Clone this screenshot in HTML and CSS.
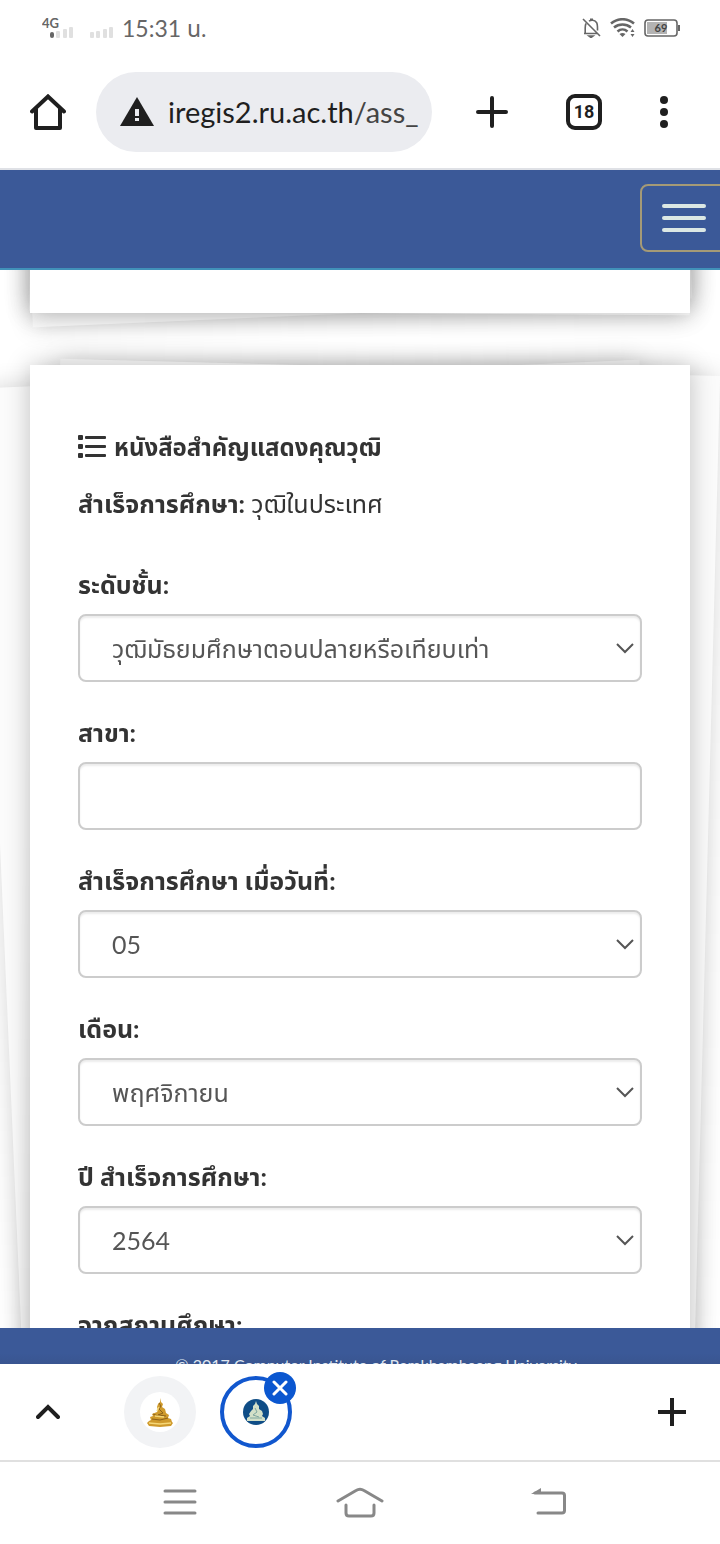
FILE: index.html
```html
<!DOCTYPE html>
<html lang="th">

<head>
    <meta charset="UTF-8">
    <meta name="viewport" content="width=device-width, initial-scale=1">
    <title>iregis2.ru.ac.th</title>
    <link rel="stylesheet" href="styles.css">
</head>

<body>

    <div class="status-bar">
        <div class="status-left">
            <svg width="74" height="24" viewBox="0 0 74 24">
                <text class="net-type" x="0" y="12">4G</text>
                <rect x="8" y="16" width="4" height="6" rx="2" fill="#666" />
                <g fill="#e0e0e0">
                    <rect x="14" y="15" width="4" height="7" rx="1" />
                    <rect x="21" y="13" width="4" height="9" rx="1" />
                    <rect x="27" y="11" width="4" height="11" rx="1" />
                    <rect x="48" y="16" width="4" height="6" rx="1" />
                    <rect x="54" y="15" width="4" height="7" rx="1" />
                    <rect x="61" y="13" width="4" height="9" rx="1" />
                    <rect x="67" y="11" width="4" height="11" rx="1" />
                </g>
            </svg>
            <span class="clock">15:31 น.</span>
        </div>
        <div class="status-right">
            <svg width="20" height="20" viewBox="0 0 20 20" fill="none" stroke="#666" stroke-width="1.6">
                <path d="M4 5.5C3.2 7 3.2 8 3.2 10v5.2M2 15.500h13M1 1l17 17M7 3.200C9 1.800 12.500 1.700 14.500 4.500c1.200 1.700 1 4 1 8" />
                <path d="M7 18h4l-2 1.500zM8 1.200h3" />
            </svg>
            <svg width="26" height="20" viewBox="0 0 26 20" fill="none" stroke="#666" stroke-width="2.6">
                <path d="M1 5.500C8-.2 17-.2 24 5.500M4 9.500c5-4 12-4 17 0M7.500 13.400c3-2.600 7-2.600 10 0" />
                <path d="M9.500 16q3-2 6 0l-3 3z" fill="#666" stroke="none" />
                <path d="M20.500 14l2-3 2 3zM20.500 16l2 3 2-3z" fill="#666" stroke="none" />
            </svg>
            <svg width="36" height="18" viewBox="0 0 36 18">
                <rect x="1" y="1" width="32" height="16" rx="3" fill="#fff" stroke="#666" stroke-width="1.6" />
                <rect x="3" y="3" width="20" height="12" fill="#b3b3b3" />
                <rect x="34" y="6" width="2" height="6" fill="#666" />
                <text class="battery" x="17" y="13" text-anchor="middle">69</text>
            </svg>
        </div>
    </div>

    <div class="toolbar">
        <button class="icon-btn" aria-label="Home">
            <svg width="36" height="36" viewBox="0 0 36 36" fill="none" stroke="#1f1f1f" stroke-width="4" stroke-linejoin="round" stroke-linecap="round">
                <path d="M2 17.500L18 2.500l16 15" stroke-linejoin="miter" />
                <path d="M6 15v19h24V15" />
            </svg>
        </button>
        <a class="address" href="#">
            <svg width="34" height="30" viewBox="0 0 34 30">
                <path d="M17 0l17 29H0z" fill="#1f1f1f" />
                <path d="M15 12h4v7h-4zM15 21h4v3h-4z" fill="#ebecf0" />
            </svg>
            <span class="url">iregis2.ru.ac.th<span class="path">/ass_</span></span>
        </a>
        <button class="icon-btn new-tab" aria-label="New tab">
            <svg width="32" height="32" viewBox="0 0 32 32" stroke="#1f1f1f" stroke-width="4" stroke-linecap="round">
                <path d="M16 2v28M2 16h28" />
            </svg>
        </button>
        <button class="tab-count">18</button>
        <button class="icon-btn" aria-label="Menu">
            <svg width="10" height="32" viewBox="0 0 10 32" fill="#1f1f1f">
                <circle cx="5" cy="4" r="4" />
                <circle cx="5" cy="16" r="4" />
                <circle cx="5" cy="28" r="4" />
            </svg>
        </button>
    </div>

    <main class="page">
        <nav class="navbar">
            <button class="navbar-toggle" aria-label="Toggle navigation">
                <span class="icon-bar"></span>
                <span class="icon-bar"></span>
                <span class="icon-bar"></span>
            </button>
        </nav>

        <div class="content">
            <section class="paper paper-previous"></section>

            <section class="paper paper-form">
                <form>
                    <h4>
                        <svg width="28" height="24" viewBox="0 0 28 24" fill="#333">
                            <rect x="0" y="0" width="5" height="5" rx="1" />
                            <rect x="0" y="9" width="5" height="5" rx="1" />
                            <rect x="0" y="18" width="5" height="5" rx="1" />
                            <rect x="7" y="1" width="21" height="3" rx="1" />
                            <rect x="7" y="10" width="21" height="3" rx="1" />
                            <rect x="7" y="19" width="21" height="3" rx="1" />
                        </svg>
                        หนังสือสำคัญแสดงคุณวุฒิ
                    </h4>
                    <p class="summary"><strong>สำเร็จการศึกษา:</strong> วุฒิในประเทศ</p>

                    <div class="form-group">
                        <label for="level">ระดับชั้น:</label>
                        <div class="select-wrap">
                            <select class="form-control" id="level">
                                <option>วุฒิมัธยมศึกษาตอนปลายหรือเทียบเท่า</option>
                            </select>
                            <svg class="chevron" width="18" height="12" viewBox="0 0 18 12"><path d="M1 2l8 8 8-8" /></svg>
                        </div>
                    </div>
                    <div class="form-group">
                        <label for="major">สาขา:</label>
                        <input class="form-control" type="text" id="major">
                    </div>
                    <div class="form-group">
                        <label for="day">สำเร็จการศึกษา เมื่อวันที่:</label>
                        <div class="select-wrap">
                            <select class="form-control" id="day">
                                <option>05</option>
                            </select>
                            <svg class="chevron" width="18" height="12" viewBox="0 0 18 12"><path d="M1 2l8 8 8-8" /></svg>
                        </div>
                    </div>
                    <div class="form-group">
                        <label for="month">เดือน:</label>
                        <div class="select-wrap">
                            <select class="form-control" id="month">
                                <option>พฤศจิกายน</option>
                            </select>
                            <svg class="chevron" width="18" height="12" viewBox="0 0 18 12"><path d="M1 2l8 8 8-8" /></svg>
                        </div>
                    </div>
                    <div class="form-group">
                        <label for="year">ปี สำเร็จการศึกษา:</label>
                        <div class="select-wrap">
                            <select class="form-control" id="year">
                                <option>2564</option>
                            </select>
                            <svg class="chevron" width="18" height="12" viewBox="0 0 18 12"><path d="M1 2l8 8 8-8" /></svg>
                        </div>
                    </div>
                    <div class="form-group">
                        <label for="school">จากสถานศึกษา:</label>
                        <input class="form-control" type="text" id="school">
                    </div>
                </form>
            </section>
        </div>

        <footer class="footer">© 2017 Computer Institute of Ramkhamhaeng University</footer>
    </main>

    <div class="tab-strip">
        <button class="icon-btn" aria-label="Expand">
            <svg width="24" height="16" viewBox="0 0 24 16" fill="none" stroke="#1f1f1f" stroke-width="4" stroke-linecap="round">
                <path d="M2 13L12 3l10 10" />
            </svg>
        </button>
        <button class="tab" aria-label="Tab 1">
            <span class="tab-disc">
                <svg width="28" height="30" viewBox="0 0 28 30">
                    <path d="M14 1l1 4 2 2-1 3 3 2 1 4 3 2-1 3 3 1 1 3 1 1-2 3-11 1-11-1-2-3 2-2 2-1-1-3 3-1-1-2 5-2 1-2-1-3 1-3 2-2z" fill="#cf9a2c" />
                    <path d="M13 6l2 3-2 3 4 4-5 2 8 1M7 17l5 2M6 22l8 1 8-2" fill="none" stroke="#8a611b" stroke-width="1" />
                    <path d="M13 10l-2 4M9 19l9 1M3 26l11 1 11-1" fill="none" stroke="#f5d777" stroke-width="1.5" />
                </svg>
            </span>
        </button>
        <button class="tab tab-active" aria-label="Tab 2">
            <svg width="28" height="28" viewBox="0 0 28 28">
                <circle cx="14" cy="14" r="13" fill="#0f4d86" />
                <path d="M14 3l1 3 2 2v3l3 2 1 3-1 2 3 2v3H5v-3l3-2-1-2 2-3 2-2V8l2-2z" fill="#d3e0c8" />
                <path d="M13 10l2 4-4 3 6 2M8 20h12" fill="none" stroke="#7fa69f" />
            </svg>
            <span class="tab-close">
                <svg width="16" height="16" viewBox="0 0 16 16" stroke="#fff" stroke-width="3" stroke-linecap="round">
                    <path d="M2 2l12 12M14 2L2 14" />
                </svg>
            </span>
        </button>
        <button class="icon-btn add-tab" aria-label="Add tab">
            <svg width="28" height="28" viewBox="0 0 28 28" stroke="#1f1f1f" stroke-width="4">
                <path d="M14 0v28M0 14h28" />
            </svg>
        </button>
    </div>

    <div class="system-nav">
        <button class="icon-btn" aria-label="Recent apps">
            <svg width="34" height="28" viewBox="0 0 34 28" stroke="#888" stroke-width="3" stroke-linecap="round">
                <path d="M2 3h30M2 14h30M2 25h30" />
            </svg>
        </button>
        <button class="icon-btn" aria-label="Home screen">
            <svg width="48" height="32" viewBox="0 0 48 32" fill="none" stroke="#888" stroke-width="3" stroke-linecap="round">
                <path d="M2 15L20 4.500q4-2.500 8 0L46 15M10 19v8q0 3 3 3h22q3 0 3-3v-8" />
            </svg>
        </button>
        <button class="icon-btn" aria-label="Back">
            <svg width="54" height="28" viewBox="-18 0 54 28" fill="none" stroke="#888" stroke-width="3" stroke-linecap="round">
                <path d="M4 5h27q2.500 0 2.500 2.500v15q0 2.500-2.500 2.500H7" />
                <path d="M0 6l10-6v6z" fill="#888" stroke="none" />
            </svg>
        </button>
    </div>

</body>

</html>
```
FILE: styles.css
```css
* {
    box-sizing: border-box;
}

body {
    margin: 0;
    height: 100vh;
    display: flex;
    flex-direction: column;
    overflow: hidden;
    background: #fff;
    color: #333;
    font-family: Lato, "Noto Sans", "Noto Sans Thai", sans-serif;
    font-size: 25px;
    line-height: 40px;
}

button {
    padding: 0;
    border: none;
    background: none;
    font-family: inherit;
    cursor: pointer;
}

svg {
    display: block;
    flex: none;
}

/* phone status bar */

.status-bar {
    flex: none;
    height: 56px;
    padding: 0 40px 0 42px;
    display: flex;
    justify-content: space-between;
    align-items: center;
    color: #666;
}

.status-left,
.status-right {
    display: flex;
    align-items: center;
    gap: 8px;
}

.status-left {
    gap: 6px;
}

.clock {
    font-size: 23px;
}

.net-type {
    font-size: 13px;
    font-weight: bold;
    fill: #666;
}

.battery {
    font-size: 11px;
    font-weight: bold;
    fill: #444;
}

/* browser toolbar */

.toolbar {
    flex: none;
    height: 114px;
    padding: 0 51px 0 30px;
    display: flex;
    align-items: center;
    border-bottom: 2px solid #dfe1e6;
}

.address {
    flex: 1;
    height: 80px;
    margin-left: 30px;
    padding: 0 12px 0 24px;
    display: flex;
    align-items: center;
    gap: 14px;
    border-radius: 40px;
    background: #ebecf0;
    color: #1f1f1f;
    text-decoration: none;
    font-size: 29px;
    overflow: hidden;
}

.url {
    white-space: nowrap;
}

.path {
    color: #444;
}

.new-tab {
    margin: 0 58px 0 44px;
}

.tab-count {
    width: 36px;
    height: 36px;
    margin-right: 57px;
    border: 4px solid #1f1f1f;
    border-radius: 9px;
    color: #1f1f1f;
    font-family: Roboto, sans-serif;
    font-size: 18px;
    font-weight: bold;
    line-height: 28px;
}

/* web page */

.page {
    flex: 1;
    min-height: 0;
    display: flex;
    flex-direction: column;
    overflow: hidden;
}

.navbar {
    flex: none;
    height: 100px;
    padding-top: 14px;
    display: flex;
    justify-content: flex-end;
    align-items: flex-start;
    background: #3b5998;
    border-bottom: 2px solid #4191b9;
}

.navbar-toggle {
    height: 68px;
    margin-right: -8px;
    padding: 0 20px;
    display: flex;
    flex-direction: column;
    justify-content: center;
    gap: 8px;
    border: 2px solid #a59a76;
    border-radius: 8px;
}

.icon-bar {
    width: 44px;
    height: 4px;
    border-radius: 2px;
    background: #dce8e4;
}

.content {
    flex: 1;
    min-height: 0;
    padding: 0 30px;
    overflow: hidden;
}

.paper {
    position: relative;
    z-index: 0;
    transform-style: preserve-3d;
    background: #fff;
    box-shadow: 0 0 24px rgba(0, 0, 0, 0.24);
}

/* loose sheets under each paper */

.paper::before,
.paper::after {
    content: '';
    position: absolute;
    inset: 0;
    background: #fbfbfb;
    box-shadow: 0 0 24px rgba(0, 0, 0, 0.16);
}

.paper::before {
    transform: translateZ(-1px) rotate(-2.5deg);
}

.paper::after {
    transform: translateZ(-1px) rotate(1.5deg);
}

.paper-previous {
    height: 120px;
    margin-top: -77px;
    margin-bottom: 52px;
}

.paper-previous::after {
    transform: translateZ(-1px) rotate(0.4deg);
}

.paper-form {
    min-height: 2310px;
    padding: 62px 48px;
}

.paper-form::before {
    top: 8px;
}

.paper-form::after {
    top: 2px;
}

h4 {
    margin: 0 0 16px;
    display: flex;
    align-items: center;
    gap: 8px;
    font-size: 24px;
    line-height: 40px;
}

.summary {
    margin: 0 0 41px;
}

.form-group {
    margin-bottom: 30px;
}

label {
    display: block;
    margin-bottom: 10px;
    font-weight: bold;
}

.select-wrap {
    display: grid;
    align-items: center;
}

.select-wrap > * {
    grid-area: 1 / 1;
}

.form-control {
    display: block;
    width: 100%;
    height: 68px;
    padding: 12px 32px;
    appearance: none;
    border: 2px solid #ccc;
    border-radius: 8px;
    background: #fff;
    box-shadow: inset 0 2px 2px rgba(0, 0, 0, 0.08);
    color: #555;
    font-family: inherit;
    font-size: 25px;
    line-height: 40px;
}

.chevron {
    justify-self: end;
    margin-right: 8px;
    fill: none;
    stroke: #555;
    stroke-width: 2;
    pointer-events: none;
}

.footer {
    flex: none;
    height: 36px;
    padding: 21px 0 0 32px;
    overflow: hidden;
    background: linear-gradient(#3b5998 70%, #395590);
    color: #dfe5ef;
    font-size: 16px;
    line-height: 32px;
    text-align: center;
}

/* tab strip */

.tab-strip {
    flex: none;
    height: 98px;
    padding: 0 34px 0 36px;
    display: flex;
    align-items: center;
    border-bottom: 2px solid #e0e0e0;
}

.tab {
    position: relative;
    width: 72px;
    height: 72px;
    display: flex;
    align-items: center;
    justify-content: center;
    margin-left: 64px;
    border-radius: 50%;
    background: #f2f3f5;
}

.tab-disc {
    width: 40px;
    height: 40px;
    display: flex;
    align-items: center;
    justify-content: center;
    border-radius: 50%;
    background: #fff;
}

.tab-active {
    margin-left: 24px;
    border: 4px solid #1157ce;
    background: #fff;
}

.tab-close {
    position: absolute;
    top: -8px;
    right: -8px;
    width: 32px;
    height: 32px;
    display: flex;
    align-items: center;
    justify-content: center;
    border-radius: 50%;
    background: #0b57d0;
}

.add-tab {
    margin-left: auto;
}

/* system buttons */

.system-nav {
    flex: none;
    height: 82px;
    padding: 0 90px 2px;
    display: grid;
    grid-template-columns: repeat(3, 1fr);
    align-items: center;
    justify-items: center;
}
```
